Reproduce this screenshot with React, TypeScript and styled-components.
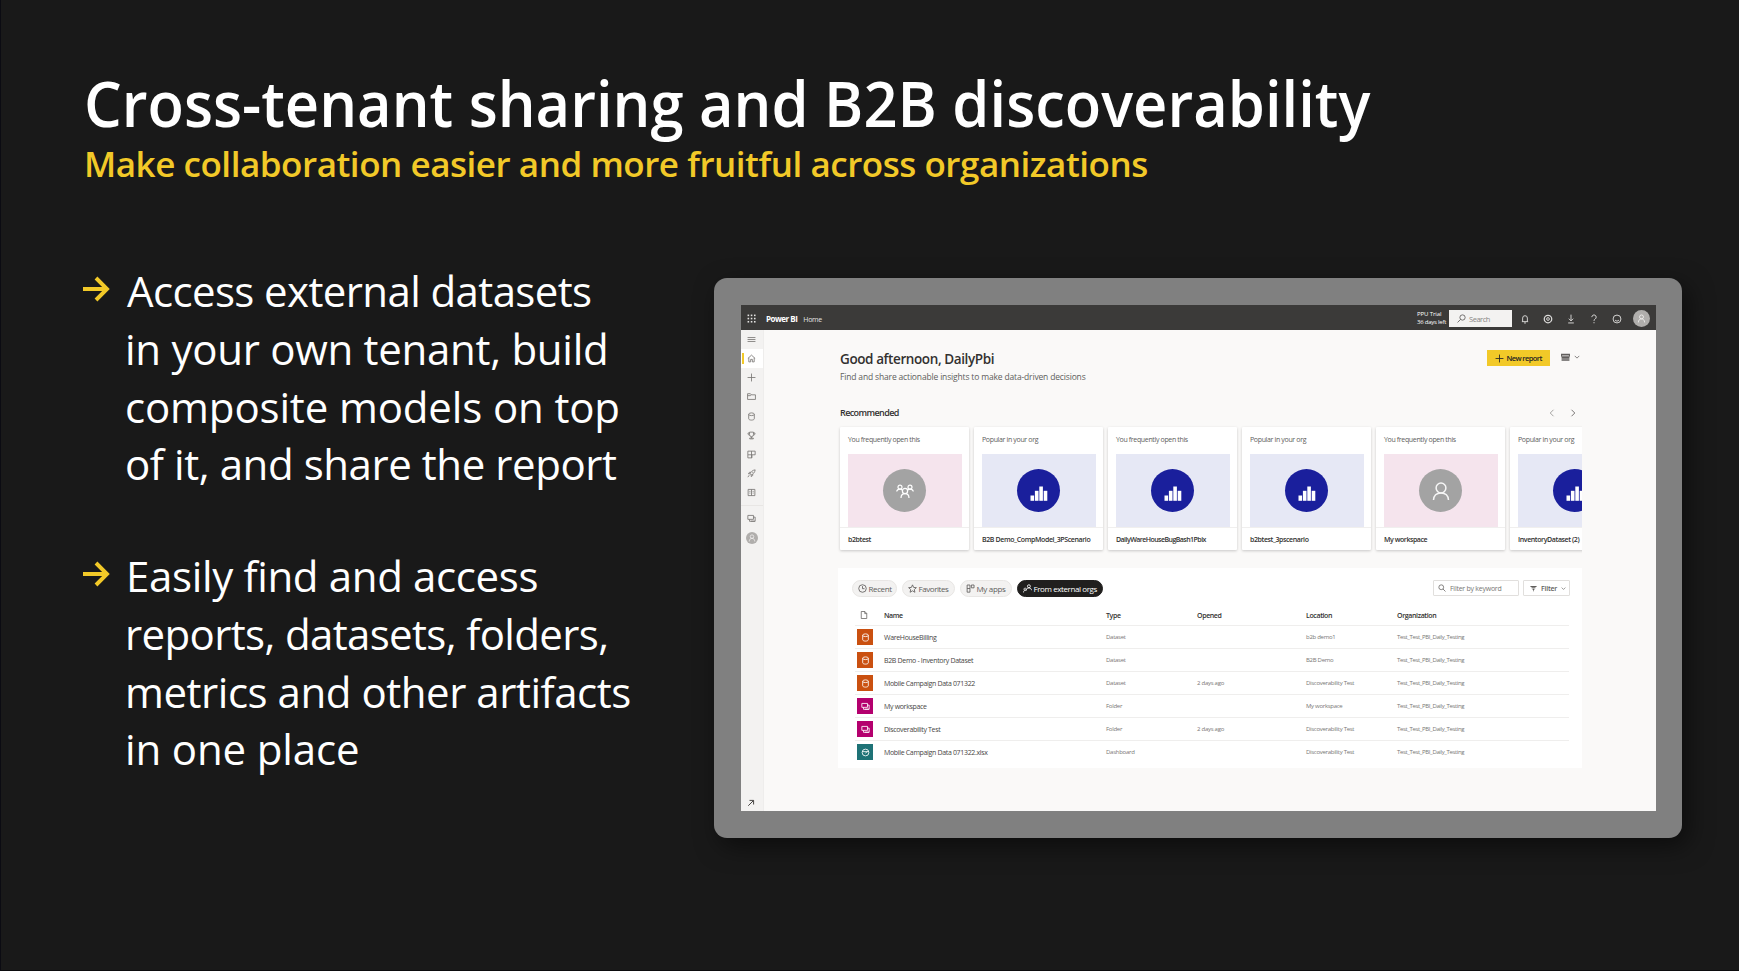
import React from "react";
import styled, { createGlobalStyle, css } from "styled-components";

const GlobalStyle = createGlobalStyle`
  *, *::before, *::after { box-sizing: border-box; }
  body { margin: 0; background: #191919; }
  h1, h2, h3, p, ul { margin: 0; padding: 0; }
`;

const fontStack = `"Open Sans", "Noto Sans", sans-serif`;

/* ---------- slide ---------- */

const Slide = styled.main`
  width: 1739px;
  height: 971px;
  overflow: hidden;
  background: #191919;
  border-left: 1px solid #0b0b12;
  border-bottom: 1px solid #0b0b0d;
  font-family: ${fontStack};
  color: #fff;
`;

const Heading = styled.header`
  padding: 63px 0 0 83px;
`;

const Title = styled.h1`
  width: max-content;
  font-size: 64px;
  font-weight: 600;
  line-height: 79px;
  white-space: nowrap;
  transform: scaleX(0.932);
  transform-origin: left center;
`;

const Subtitle = styled.h2`
  font-size: 35px;
  font-weight: 600;
  line-height: 44px;
  letter-spacing: -0.464px;
  white-space: nowrap;
  color: #f2c928;
`;

const Body = styled.section`
  display: flex;
  align-items: flex-start;
`;

const Bullets = styled.ul`
  display: flex;
  flex-direction: column;
  gap: 54.6px;
  width: 713px;
  padding: 76.4px 0 0 82px;
  list-style: none;
`;

const Bullet = styled.li`
  display: flex;
`;

const BulletArrow = styled.svg`
  flex: none;
  width: 28px;
  height: 26px;
  margin: 14px 14px 0 0;
  fill: none;
  stroke: #f2c928;
  stroke-width: 3.9;
`;

const BulletText = styled.p`
  display: flex;
  flex-direction: column;
  font-size: 42px;
  line-height: 57.6px;
`;

const Line = styled.span<{ $track: number; $indent?: number }>`
  white-space: nowrap;
  letter-spacing: ${(p) => p.$track}px;
  margin-left: ${(p) => p.$indent ?? 0}px;
`;

/* ---------- device frame ---------- */

const Frame = styled.div`
  flex: none;
  width: 968px;
  height: 560px;
  margin-top: 92px;
  padding: 27px 26px 27px 27px;
  border-radius: 13px;
  background: #808080;
  box-shadow: 6px 8px 24px rgba(0, 0, 0, 0.5);
`;

const Screen = styled.div`
  display: flex;
  flex-direction: column;
  width: 915px;
  height: 506px;
  overflow: hidden;
  background: #faf9f8;
  color: #323130;
`;

const Text = styled.span<{ $size: number; $track?: number; $weight?: number; $color?: string }>`
  font-size: ${(p) => p.$size}px;
  letter-spacing: ${(p) => p.$track ?? 0}px;
  font-weight: ${(p) => p.$weight ?? 400};
  color: ${(p) => p.$color ?? "inherit"};
  white-space: nowrap;
`;

const Glyph = styled.svg<{ $size: number }>`
  flex: none;
  display: block;
  width: ${(p) => p.$size}px;
  height: ${(p) => p.$size}px;
  fill: none;
  stroke: currentColor;
  stroke-width: 1.5;
`;

/* ---------- app bar ---------- */

const AppBar = styled.div`
  flex: none;
  display: flex;
  align-items: center;
  height: 25px;
  padding: 2px 6px 0 6px;
  background: #3b3a39;
  color: #e4e3e2;
`;

const Brand = styled.div`
  display: flex;
  align-items: baseline;
  gap: 6px;
  margin-left: 10px;
`;

const TrialNote = styled.div`
  display: flex;
  flex-direction: column;
  margin-left: auto;
  width: 32px;
  line-height: 7.6px;
`;

const SearchBox = styled.div`
  display: flex;
  align-items: center;
  gap: 3px;
  width: 63px;
  height: 17px;
  padding: 0 8px;
  background: #f3f2f1;
  color: #605e5c;
`;

const AppBarIcons = styled.div`
  display: flex;
  align-items: center;
  gap: 13px;
  margin: 0 11px 0 8px;
  color: #dcdbda;
`;

const Avatar = styled.div<{ $size: number }>`
  flex: none;
  display: flex;
  align-items: center;
  justify-content: center;
  width: ${(p) => p.$size}px;
  height: ${(p) => p.$size}px;
  border-radius: 50%;
  background: #b0aeac;
  color: #f3f2f1;
`;

/* ---------- navigation rail ---------- */

const Workspace = styled.div`
  flex: 1;
  display: flex;
  min-height: 0;
`;

const Rail = styled.nav`
  flex: none;
  display: flex;
  flex-direction: column;
  width: 23px;
  background: #f3f2f1;
  border-right: 1px solid #eeedec;
  color: #7a7876;
`;

const RailItem = styled.div<{ $active?: boolean }>`
  display: flex;
  align-items: center;
  justify-content: center;
  height: 19.15px;
  padding-right: 2px;
  ${(p) =>
    p.$active &&
    css`
      background: #fff;
      padding-right: 6px;
      &::before {
        content: "";
        width: 2px;
        height: 11px;
        margin-right: 3px;
        background: #f2c928;
      }
    `}
`;

const RailDivider = styled.hr`
  width: 100%;
  height: 1px;
  margin: 3px 0;
  border: 0;
  background: #e8e6e4;
`;

const RailAvatarItem = styled(RailItem)`
  padding-right: 0;
`;

const RailFooter = styled(RailItem)`
  height: 17px;
  margin-top: auto;
  color: #484644;
`;

/* ---------- home content ---------- */

const Content = styled.div`
  width: 818px;
  padding: 19px 0 0 76px;
`;

const TopRow = styled.div`
  display: flex;
  align-items: flex-start;
  height: 57px;
`;

const Greeting = styled.div`
  display: flex;
  flex-direction: column;
  gap: 2px;
  flex: 1;
`;

const GreetingTitle = styled(Text)`
  line-height: 20px;
`;

const GreetingSub = styled(Text)`
  line-height: 12px;
`;

const NewReport = styled.div`
  display: flex;
  align-items: center;
  gap: 2.5px;
  width: 63px;
  height: 16px;
  margin: 1px 11px 0 0;
  padding-left: 8px;
  background: #f2c928;
  color: #252423;
`;

const ViewSwitch = styled.div`
  display: flex;
  align-items: center;
  gap: 3.5px;
  width: 21px;
  height: 16px;
  color: #605e5c;
`;

const SectionRow = styled.div`
  display: flex;
  align-items: center;
  justify-content: space-between;
  height: 14px;
  padding-right: 5px;
  margin-bottom: 7px;
  line-height: 14px;
`;

const Pager = styled.div`
  display: flex;
  gap: 13px;
  color: #797775;
`;

const PagerArrow = styled(Glyph)<{ $dim?: boolean }>`
  opacity: ${(p) => (p.$dim ? 0.65 : 1)};
  stroke-width: 2;
`;

const CardStrip = styled.div`
  display: flex;
  gap: 5px;
  margin: -4px 0 -6px -4px;
  padding: 4px 0 6px 4px;
  overflow: hidden;
`;

const Card = styled.article`
  flex: none;
  width: 129px;
  height: 123px;
  background: #fff;
  border-radius: 1px;
  box-shadow: 0 1px 3px rgba(0, 0, 0, 0.2);
`;

const CardReason = styled.div`
  display: flex;
  align-items: center;
  height: 27px;
  padding: 0 8px 2px;
`;

const CardArt = styled.div<{ $tone: "pink" | "blue" }>`
  display: flex;
  align-items: center;
  justify-content: center;
  height: 73px;
  margin: 0 7px 0 8px;
  padding-right: 1px;
  background: ${(p) => (p.$tone === "pink" ? "#f5e4ed" : "#e6e8f5")};
`;

const Disc = styled.div<{ $tone: "pink" | "blue" }>`
  display: flex;
  align-items: center;
  justify-content: center;
  width: 43px;
  height: 43px;
  padding-top: ${(p) => (p.$tone === "pink" ? 1 : 5)}px;
  border-radius: 50%;
  background: ${(p) => (p.$tone === "pink" ? "#a3a3a3" : "#1a1f9c")};
  color: #fff;
`;

const CardName = styled.div`
  display: flex;
  align-items: center;
  height: 23px;
  padding: 0 8px;
  border-top: 1px solid #f0efee;
`;

/* ---------- artifacts panel ---------- */

const Panel = styled.section`
  height: 200px;
  margin: 18px 0 0 -2px;
  padding: 12px 12px 0 14px;
  background: #fff;
`;

const PanelBar = styled.div`
  display: flex;
  align-items: flex-start;
  justify-content: space-between;
  height: 17px;
`;

const Pills = styled.div`
  display: flex;
  gap: 5px;
`;

const Pill = styled.div<{ $width: number; $active?: boolean }>`
  display: flex;
  align-items: center;
  gap: 2px;
  width: ${(p) => p.$width}px;
  height: 17px;
  padding-left: 4.5px;
  border: 1px solid ${(p) => (p.$active ? "#201f1e" : "#e8e6e4")};
  border-radius: 9px;
  background: ${(p) => (p.$active ? "#201f1e" : "#f3f2f1")};
  color: ${(p) => (p.$active ? "#fff" : "#605e5c")};
`;

const Filters = styled.div`
  display: flex;
  gap: 4px;
`;

const FilterBox = styled.div<{ $width: number }>`
  display: flex;
  align-items: center;
  gap: 4px;
  width: ${(p) => p.$width}px;
  height: 16px;
  padding-left: ${(p) => (p.$width > 60 ? 4 : 6)}px;
  border: 1px solid #e1dfdd;
  border-radius: 1px;
  color: #605e5c;
`;

const Table = styled.div`
  margin: 0 1px 0 3px;
`;

const TableRow = styled.div<{ $head?: boolean }>`
  display: grid;
  grid-template-columns: 29px 222px 91px 109px 91px 1fr;
  align-items: center;
  height: ${(p) => (p.$head ? 28 : 23)}px;
  padding-top: ${(p) => (p.$head ? 8 : 0)}px;
  border-top: ${(p) => (p.$head ? "0" : "1px solid #efeeed")};
`;

const HeadIcon = styled.div`
  padding-left: 5px;
  color: #605e5c;
`;

const KindTile = styled.div<{ $kind: Kind }>`
  display: flex;
  align-items: center;
  justify-content: center;
  width: 16px;
  height: 16px;
  margin-left: 2px;
  background: ${(p) => ({ dataset: "#ca5010", folder: "#b4006e", dashboard: "#1e7276" })[p.$kind]};
  color: #fff;
`;

/* ---------- icons (16 unit grid) ---------- */

type Kind = "dataset" | "folder" | "dashboard";

const shapes = {
  waffle: (
    <g fill="currentColor" stroke="none">
      {[1, 6.7, 12.4].flatMap((y) => [1, 6.7, 12.4].map((x) => <rect key={`${x}-${y}`} x={x} y={y} width="2.8" height="2.8" />))}
    </g>
  ),
  menu: <path d="M1 4.5h14M1 8h14M1 11.5h14" />,
  home: <path d="M1.5 8 8 2l6.5 6M3.2 6.8V14h3.3v-4.5h3V14h3.3V6.8" />,
  plus: <path d="M8 1v14M1 8h14" />,
  folder: <path d="M1 13.2V3h5l1.5 2H15v8.2zM1 6.5h5L7.5 5" />,
  database: (
    <>
      <ellipse cx="8" cy="4" rx="5" ry="2.4" />
      <path d="M3 4v8c0 1.300 2.200 2.400 5 2.400s5-1.100 5-2.400V4" />
    </>
  ),
  trophy: <path d="M4.500 2h7v4.500a3.500 3.500 0 0 1-7 0zM4.500 3.500H1.800c0 3 1 4 3 4M11.500 3.500h2.700c0 3-1 4-3 4M8 10v3M4.800 14h6.400v-1.500H4.800z" />,
  apps: <path d="M1.500 2h13v6.500h-13zM8 2v12M1.500 8.500V14h7.300V8.500" />,
  appsOutline: <path d="M7 14.500H2V1.800h5zM2 8h5M9.500 1.800h4.800v5H9.500z" />,
  rocket: <path d="M5.500 8.500C7 5 10 2 14.500 1.500 14 6 11 9 7.500 10.500zM5.500 8.500H2.500L4.500 5.800h2.600M7.500 10.500v3l2.700-2V9M4 11l-2.500 3.500M9.500 6.500l1-1" />,
  book: <path d="M2 2.500h12v11H2zM8 2.500v11M4.300 6h1.800M4.300 9h1.800M10 6h1.800M10 9h1.800" />,
  layers: <path d="M1.500 2.500h10v7h-10zM4.500 9.500v3.500h10V5.500h-3M7 12.800h7" />,
  user: (
    <>
      <circle cx="8" cy="5.200" r="3.500" />
      <path d="M2.500 15c0-4 2.300-6.300 5.500-6.300s5.500 2.300 5.500 6.300" />
    </>
  ),
  expand: <path d="M2.500 13.500 13 3M5 2.800h8.200V11" strokeWidth="2" />,
  search: (
    <>
      <circle cx="9.800" cy="6.200" r="4.700" />
      <path d="M6.400 9.600 1 15" />
    </>
  ),
  searchAlt: (
    <>
      <circle cx="6.500" cy="6.500" r="4.800" />
      <path d="m10 10 5 5" />
    </>
  ),
  bell: <path d="M3 12.200h10M4.200 12V6.500a3.800 3.800 0 0 1 7.600 0V12M6.500 14.300h3" />,
  settings: (
    <>
      <circle cx="8" cy="8" r="6" strokeWidth="2" />
      <circle cx="8" cy="8" r="2.200" />
    </>
  ),
  download: <path d="M8 1v10M4.500 7.500 8 11l3.500-3.500M3.500 14.300h9" />,
  help: (
    <>
      <path d="M4.500 5a3.500 3.500 0 1 1 5.300 3C8.500 8.800 8 9.500 8 11" />
      <path d="M8 13v1.800" />
    </>
  ),
  smile: (
    <>
      <circle cx="8" cy="8" r="6.300" />
      <path d="M4.800 9.500c1.600 2.400 4.800 2.400 6.400 0" />
    </>
  ),
  tiles: <path d="M1 2.500h14v3H1zM1 8h14M1 10.500h14M1 13h14" strokeWidth="1.900" />,
  down: <path d="m2 5 6 6 6-6" strokeWidth="2" />,
  left: <path d="M11 1.500 4.500 8l6.500 6.500" />,
  right: <path d="M5 1.500 11.500 8 5 14.500" />,
  clock: (
    <>
      <circle cx="8" cy="8" r="6.700" />
      <path d="M8 3.800V8.300h3.600" />
    </>
  ),
  star: <path d="m8 1.500 2 4.600 4.900.4-3.700 3.300 1.100 4.900L8 12.100l-4.300 2.600 1.100-4.900L1.100 6.500 6 6.100z" />,
  people: (
    <>
      <circle cx="10.500" cy="4" r="2.600" />
      <path d="M5.500 12c0-3 2-5 5-5s4.500 1.500 4.500 4M3.800 7.200a2 2 0 1 0 .1 0M1 15c0-2.500 1-4 3-4" />
    </>
  ),
  filter: <path d="M1 3.200h14M3.500 6.500h9M6 10h4M7 13h2" strokeWidth="2.400" />,
  file: <path d="M2.500 1h7.200L13.500 5v10h-11zM9.500 1v4.200h4" />,
  gauge: (
    <>
      <circle cx="8" cy="8" r="6" />
      <path d="M2 6.500h12M8 9.500 11 6" />
    </>
  ),
};

type IconName = keyof typeof shapes;

const Icon = ({ name, size }: { name: IconName; size: number }) => (
  <Glyph $size={size} viewBox="0 0 16 16">
    {shapes[name]}
  </Glyph>
);

const ChartArt = () => (
  <svg width="18" height="15" viewBox="0 0 18 15" fill="#fff">
    <rect x="0.500" y="9.500" width="3.600" height="5.300" />
    <rect x="4.900" y="4.800" width="3.600" height="10" />
    <rect x="9.300" y="0.500" width="3.600" height="14.300" />
    <rect x="13.700" y="4.800" width="3.600" height="10" />
  </svg>
);

const GroupArt = () => (
  <svg width="18" height="15" viewBox="0 0 18 15" fill="none" stroke="#fff" strokeWidth="1.200">
    <circle cx="4" cy="3.200" r="2" />
    <circle cx="14" cy="3.200" r="2" />
    <circle cx="9" cy="7" r="2.600" />
    <path d="M.7 7.500C1 6 2.300 5.200 4 5.200c1 0 1.800.4 2.500 1M17.300 7.500C17 6 15.700 5.200 14 5.200c-1 0-1.800.4-2.500 1M5 14c0-2.800 1.700-4.400 4-4.400s4 1.600 4 4.400" />
  </svg>
);

const PersonArt = () => (
  <svg width="18" height="19" viewBox="0 0 18 19" fill="none" stroke="#f6f6f6" strokeWidth="1.500">
    <circle cx="9" cy="6" r="4.900" />
    <path d="M1.500 18c.3-4.500 3.200-7.100 7.500-7.100s7.200 2.600 7.500 7.100" />
  </svg>
);

/* ---------- data ---------- */

const bullets = [
  [
    { text: "Access external datasets", track: -0.61, indent: 2 },
    { text: "in your own tenant, build", track: -0.28 },
    { text: "composite models on top", track: -0.14 },
    { text: "of it, and share the report", track: -0.43 },
  ],
  [
    { text: "Easily find and access", track: -0.35, indent: 1 },
    { text: "reports, datasets, folders,", track: -0.64 },
    { text: "metrics and other artifacts", track: -0.46 },
    { text: "in one place", track: -0.14 },
  ],
];

const railIcons: IconName[] = ["plus", "folder", "database", "trophy", "apps", "rocket", "book"];

const cards: { reason: string; name: string; track: number; art: "group" | "chart" | "person" }[] = [
  { reason: "You frequently open this", name: "b2btest", track: -0.4, art: "group" },
  { reason: "Popular in your org", name: "B2B Demo_CompModel_3PScenario", track: -0.38, art: "chart" },
  { reason: "You frequently open this", name: "DailyWareHouseBugBash1Pbix", track: -0.54, art: "chart" },
  { reason: "Popular in your org", name: "b2btest_3pscenario", track: -0.4, art: "chart" },
  { reason: "You frequently open this", name: "My workspace", track: -0.44, art: "person" },
  { reason: "Popular in your org", name: "InventoryDataset (2)", track: -0.39, art: "chart" },
];

const artByKind = { group: <GroupArt />, chart: <ChartArt />, person: <PersonArt /> };

const rows: { kind: Kind; name: string; type: string; opened: string; location: string }[] = [
  { kind: "dataset", name: "WareHouseBilling", type: "Dataset", opened: "", location: "b2b demo1" },
  { kind: "dataset", name: "B2B Demo - Inventory Dataset", type: "Dataset", opened: "", location: "B2B Demo" },
  { kind: "dataset", name: "Mobile Campaign Data 071322", type: "Dataset", opened: "2 days ago", location: "Discoverability Test" },
  { kind: "folder", name: "My workspace", type: "Folder", opened: "", location: "My workspace" },
  { kind: "folder", name: "Discoverability Test", type: "Folder", opened: "2 days ago", location: "Discoverability Test" },
  { kind: "dashboard", name: "Mobile Campaign Data 071322.xlsx", type: "Dashboard", opened: "", location: "Discoverability Test" },
];

const kindIcon: Record<Kind, IconName> = { dataset: "database", folder: "layers", dashboard: "gauge" };

/* ---------- sections ---------- */

const PowerBiBar = () => (
  <AppBar>
    <Icon name="waffle" size={9} />
    <Brand>
      <Text $size={8} $track={-0.5} $weight={700} $color="#fff">Power BI</Text>
      <Text $size={7} $track={-0.3}>Home</Text>
    </Brand>
    <TrialNote>
      <Text $size={6} $track={-0.1} $color="#fff">PPU Trial</Text>
      <Text $size={6} $track={-0.23} $color="#fff">36 days left</Text>
    </TrialNote>
    <SearchBox>
      <Icon name="search" size={9} />
      <Text $size={7.5} $track={-0.46} $color="#8a8886">Search</Text>
    </SearchBox>
    <AppBarIcons>
      {(["bell", "settings", "download", "help", "smile"] as IconName[]).map((name) => (
        <Icon key={name} name={name} size={10} />
      ))}
    </AppBarIcons>
    <Avatar $size={17}>
      <Icon name="user" size={9} />
    </Avatar>
  </AppBar>
);

const SideRail = () => (
  <Rail>
    <RailItem><Icon name="menu" size={9} /></RailItem>
    <RailItem $active><Icon name="home" size={9} /></RailItem>
    {railIcons.map((name) => (
      <RailItem key={name}><Icon name={name} size={9} /></RailItem>
    ))}
    <RailDivider />
    <RailItem><Icon name="layers" size={9} /></RailItem>
    <RailAvatarItem>
      <Avatar $size={12}><Icon name="user" size={8} /></Avatar>
    </RailAvatarItem>
    <RailFooter><Icon name="expand" size={8} /></RailFooter>
  </Rail>
);

const Recommended = () => (
  <>
    <SectionRow>
      <Text $size={9} $track={-0.6} $weight={600}>Recommended</Text>
      <Pager>
        <PagerArrow $size={8} $dim viewBox="0 0 16 16">{shapes.left}</PagerArrow>
        <PagerArrow $size={8} viewBox="0 0 16 16">{shapes.right}</PagerArrow>
      </Pager>
    </SectionRow>
    <CardStrip>
      {cards.map((card) => {
        const tone = card.art === "chart" ? "blue" : "pink";
        return (
          <Card key={card.name}>
            <CardReason>
              <Text $size={7} $track={-0.35} $color="#605e5c">{card.reason}</Text>
            </CardReason>
            <CardArt $tone={tone}>
              <Disc $tone={tone}>{artByKind[card.art]}</Disc>
            </CardArt>
            <CardName>
              <Text $size={7} $track={card.track} $weight={600}>{card.name}</Text>
            </CardName>
          </Card>
        );
      })}
    </CardStrip>
  </>
);

const Artifacts = () => (
  <Panel>
    <PanelBar>
      <Pills>
        <Pill $width={45}><Icon name="clock" size={9} /><Text $size={8} $track={-0.38}>Recent</Text></Pill>
        <Pill $width={53}><Icon name="star" size={9} /><Text $size={8} $track={-0.43}>Favorites</Text></Pill>
        <Pill $width={52}><Icon name="appsOutline" size={9} /><Text $size={8} $track={-0.33}>My apps</Text></Pill>
        <Pill $width={86} $active><Icon name="people" size={9} /><Text $size={8} $track={-0.4}>From external orgs</Text></Pill>
      </Pills>
      <Filters>
        <FilterBox $width={86}><Icon name="searchAlt" size={8} /><Text $size={7} $track={-0.25} $color="#797775">Filter by keyword</Text></FilterBox>
        <FilterBox $width={47}><Icon name="filter" size={7} /><Text $size={7} $track={-0.25} $weight={600}>Filter</Text><Icon name="down" size={5} /></FilterBox>
      </Filters>
    </PanelBar>
    <Table>
      <TableRow $head>
        <HeadIcon><Icon name="file" size={8} /></HeadIcon>
        {["Name", "Type", "Opened", "Location", "Organization"].map((label) => (
          <Text key={label} $size={7} $track={-0.37} $weight={600}>{label}</Text>
        ))}
      </TableRow>
      {rows.map((row) => (
        <TableRow key={row.name}>
          <KindTile $kind={row.kind}><Icon name={kindIcon[row.kind]} size={9} /></KindTile>
          <Text $size={7} $track={-0.33} $color="#484644">{row.name}</Text>
          <Text $size={6} $track={-0.26} $color="#797775">{row.type}</Text>
          <Text $size={6} $track={-0.26} $color="#797775">{row.opened}</Text>
          <Text $size={6} $track={-0.29} $color="#797775">{row.location}</Text>
          <Text $size={6} $track={-0.357} $color="#797775">Test_Test_PBI_Daily_Testing</Text>
        </TableRow>
      ))}
    </Table>
  </Panel>
);

export default function App() {
  return (
    <Slide>
      <GlobalStyle />
      <Heading>
        <Title>Cross-tenant sharing and B2B discoverability</Title>
        <Subtitle>Make collaboration easier and more fruitful across organizations</Subtitle>
      </Heading>
      <Body>
        <Bullets>
          {bullets.map((lines) => (
            <Bullet key={lines[0].text}>
              <BulletArrow viewBox="0 0 28 26">
                <path d="M0 13h24.500M13 2 24 13 13 24" />
              </BulletArrow>
              <BulletText>
                {lines.map((line) => (
                  <Line key={line.text} $track={line.track} $indent={line.indent}>{line.text}</Line>
                ))}
              </BulletText>
            </Bullet>
          ))}
        </Bullets>
        <Frame>
          <Screen>
            <PowerBiBar />
            <Workspace>
              <SideRail />
              <Content>
                <TopRow>
                  <Greeting>
                    <GreetingTitle $size={13.5} $track={-0.4} $weight={600}>Good afternoon, DailyPbi</GreetingTitle>
                    <GreetingSub $size={8.5} $track={-0.16} $color="#605e5c">
                      Find and share actionable insights to make data-driven decisions
                    </GreetingSub>
                  </Greeting>
                  <NewReport>
                    <Icon name="plus" size={9} />
                    <Text $size={7.5} $track={-0.6} $weight={600}>New report</Text>
                  </NewReport>
                  <ViewSwitch>
                    <Icon name="tiles" size={9} />
                    <Icon name="down" size={6} />
                  </ViewSwitch>
                </TopRow>
                <Recommended />
                <Artifacts />
              </Content>
            </Workspace>
          </Screen>
        </Frame>
      </Body>
    </Slide>
  );
}
